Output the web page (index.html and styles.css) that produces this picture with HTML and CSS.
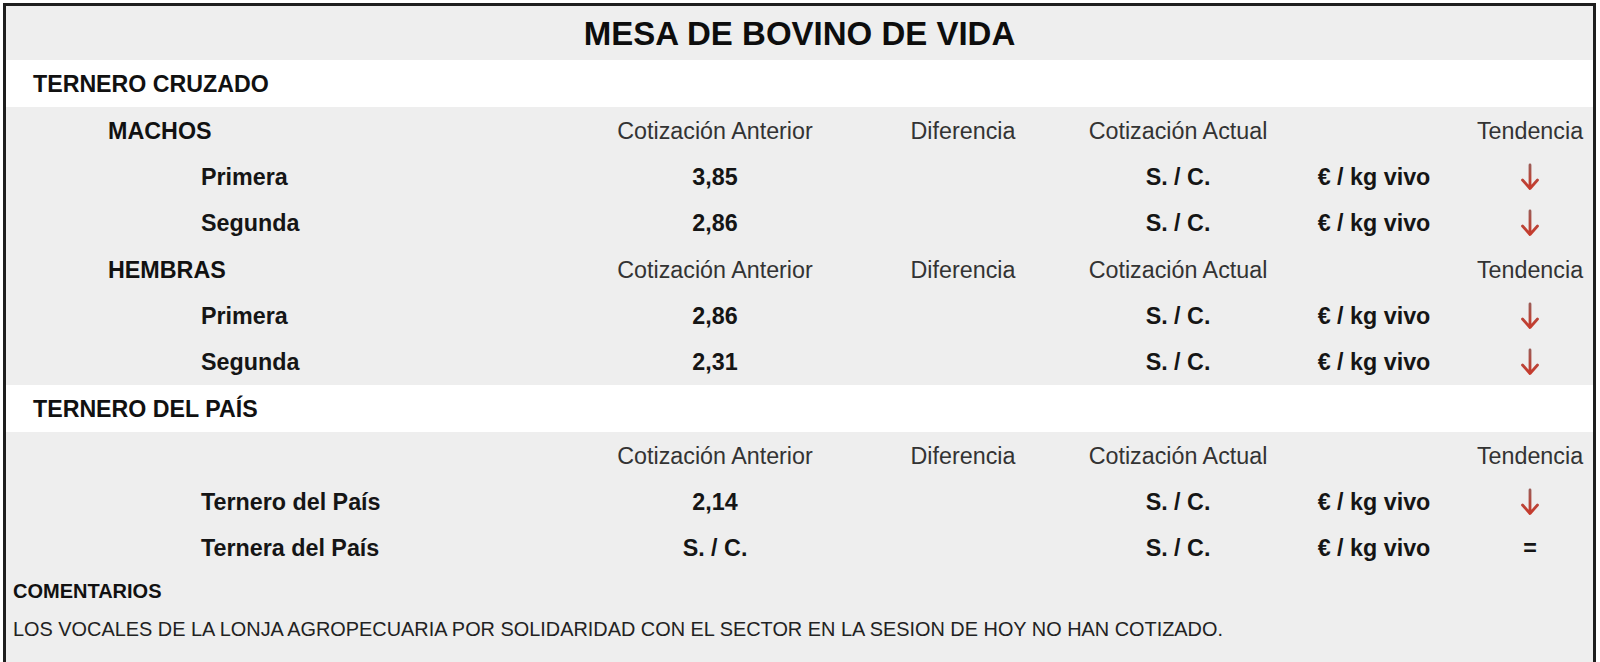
FILE: index.html
```html
<!DOCTYPE html>
<html lang="es">
<head>
<meta charset="utf-8">
<title>Mesa de Bovino de Vida</title>
<link rel="stylesheet" href="styles.css">
</head>
<body>
<svg class="defs" width="0" height="0" aria-hidden="true">
  <defs>
    <linearGradient id="arrowGrad" x1="0" y1="0" x2="0" y2="1">
      <stop offset="0" stop-color="#9c5c56"/>
      <stop offset="0.55" stop-color="#b8463a"/>
      <stop offset="1" stop-color="#c63a2c"/>
    </linearGradient>
  </defs>
</svg>
<div class="board">
  <div class="title">MESA DE BOVINO DE VIDA</div>

  <div class="section">TERNERO CRUZADO</div>

  <div class="row head">
    <div class="c1 group">MACHOS</div>
    <div class="c2">Cotización Anterior</div>
    <div class="c3">Diferencia</div>
    <div class="c4">Cotización Actual</div>
    <div class="c5"></div>
    <div class="c6">Tendencia</div>
  </div>
  <div class="row data">
    <div class="c1 item">Primera</div>
    <div class="c2">3,85</div>
    <div class="c3"></div>
    <div class="c4">S. / C.</div>
    <div class="c5">€ / kg vivo</div>
    <div class="c6"><svg class="down" viewBox="0 0 20 28"><path d="M10 2 V25 M2.5 17 L10 25.5 L17.5 17"/></svg></div>
  </div>
  <div class="row data">
    <div class="c1 item">Segunda</div>
    <div class="c2">2,86</div>
    <div class="c3"></div>
    <div class="c4">S. / C.</div>
    <div class="c5">€ / kg vivo</div>
    <div class="c6"><svg class="down" viewBox="0 0 20 28"><path d="M10 2 V25 M2.5 17 L10 25.5 L17.5 17"/></svg></div>
  </div>

  <div class="row head">
    <div class="c1 group">HEMBRAS</div>
    <div class="c2">Cotización Anterior</div>
    <div class="c3">Diferencia</div>
    <div class="c4">Cotización Actual</div>
    <div class="c5"></div>
    <div class="c6">Tendencia</div>
  </div>
  <div class="row data">
    <div class="c1 item">Primera</div>
    <div class="c2">2,86</div>
    <div class="c3"></div>
    <div class="c4">S. / C.</div>
    <div class="c5">€ / kg vivo</div>
    <div class="c6"><svg class="down" viewBox="0 0 20 28"><path d="M10 2 V25 M2.5 17 L10 25.5 L17.5 17"/></svg></div>
  </div>
  <div class="row data">
    <div class="c1 item">Segunda</div>
    <div class="c2">2,31</div>
    <div class="c3"></div>
    <div class="c4">S. / C.</div>
    <div class="c5">€ / kg vivo</div>
    <div class="c6"><svg class="down" viewBox="0 0 20 28"><path d="M10 2 V25 M2.5 17 L10 25.5 L17.5 17"/></svg></div>
  </div>

  <div class="section">TERNERO DEL PAÍS</div>

  <div class="row head">
    <div class="c1 group"></div>
    <div class="c2">Cotización Anterior</div>
    <div class="c3">Diferencia</div>
    <div class="c4">Cotización Actual</div>
    <div class="c5"></div>
    <div class="c6">Tendencia</div>
  </div>
  <div class="row data">
    <div class="c1 item">Ternero del País</div>
    <div class="c2">2,14</div>
    <div class="c3"></div>
    <div class="c4">S. / C.</div>
    <div class="c5">€ / kg vivo</div>
    <div class="c6"><svg class="down" viewBox="0 0 20 28"><path d="M10 2 V25 M2.5 17 L10 25.5 L17.5 17"/></svg></div>
  </div>
  <div class="row data">
    <div class="c1 item">Ternera del País</div>
    <div class="c2">S. / C.</div>
    <div class="c3"></div>
    <div class="c4">S. / C.</div>
    <div class="c5">€ / kg vivo</div>
    <div class="c6 equal">=</div>
  </div>

  <div class="comments">
    <div class="comments-title">COMENTARIOS</div>
    <div class="comments-text">LOS VOCALES DE LA LONJA AGROPECUARIA POR SOLIDARIDAD CON EL SECTOR EN LA SESION DE HOY NO HAN COTIZADO.</div>
  </div>
</div>
</body>
</html>
```

FILE: styles.css
```css
html, body {
  margin: 0;
  padding: 0;
  overflow: hidden;
  background: #ffffff;
}

body {
  padding: 3px 4px 0 3px;
  font-family: "Liberation Sans", Arial, sans-serif;
  color: #111111;
}

.defs {
  position: absolute;
  width: 0;
  height: 0;
}

.board {
  border: 3px solid #1e1e1e;
  border-bottom: none;
  background: #eeeeee;
  min-height: 670px;
  box-sizing: border-box;
}

.title {
  height: 54px;
  display: flex;
  align-items: center;
  justify-content: center;
  font-size: 33px;
  font-weight: bold;
  color: #0d0d0d;
  padding-top: 1px;
  box-sizing: border-box;
}

.section {
  height: 47px;
  background: #ffffff;
  display: flex;
  align-items: center;
  padding-left: 27px;
  padding-top: 1px;
  box-sizing: border-box;
  font-size: 23.2px;
  font-weight: bold;
  color: #111111;
}

.row {
  display: grid;
  grid-template-columns: 594px 230px 254px 188px 204px 117px;
  height: 46px;
  align-items: center;
  font-size: 23.3px;
  white-space: nowrap;
}

.row > div {
  text-align: center;
}

.row .c1 {
  text-align: left;
}

.row .c3 {
  padding-left: 12px;
}

.row .c6 {
  padding-right: 9px;
  display: flex;
  justify-content: center;
  align-items: center;
}

.head {
  height: 47px;
  padding-top: 1px;
  box-sizing: border-box;
  color: #333333;
}

.head .group {
  padding-left: 102px;
  font-weight: bold;
  color: #111111;
}

.data {
  font-weight: bold;
  color: #151515;
}

.data .item {
  padding-left: 195px;
}

.down {
  width: 20px;
  height: 28px;
  fill: none;
  stroke: url(#arrowGrad);
  stroke-width: 2.8;
  stroke-linecap: round;
  stroke-linejoin: round;
}

.equal {
  font-weight: bold;
}

.comments {
  padding: 3px 0 0 7px;
}

.comments-title {
  font-size: 20px;
  font-weight: bold;
  color: #111111;
  height: 34px;
  display: flex;
  align-items: center;
}

.comments-text {
  font-size: 19.9px;
  color: #222222;
  height: 42px;
  display: flex;
  align-items: center;
}
```
